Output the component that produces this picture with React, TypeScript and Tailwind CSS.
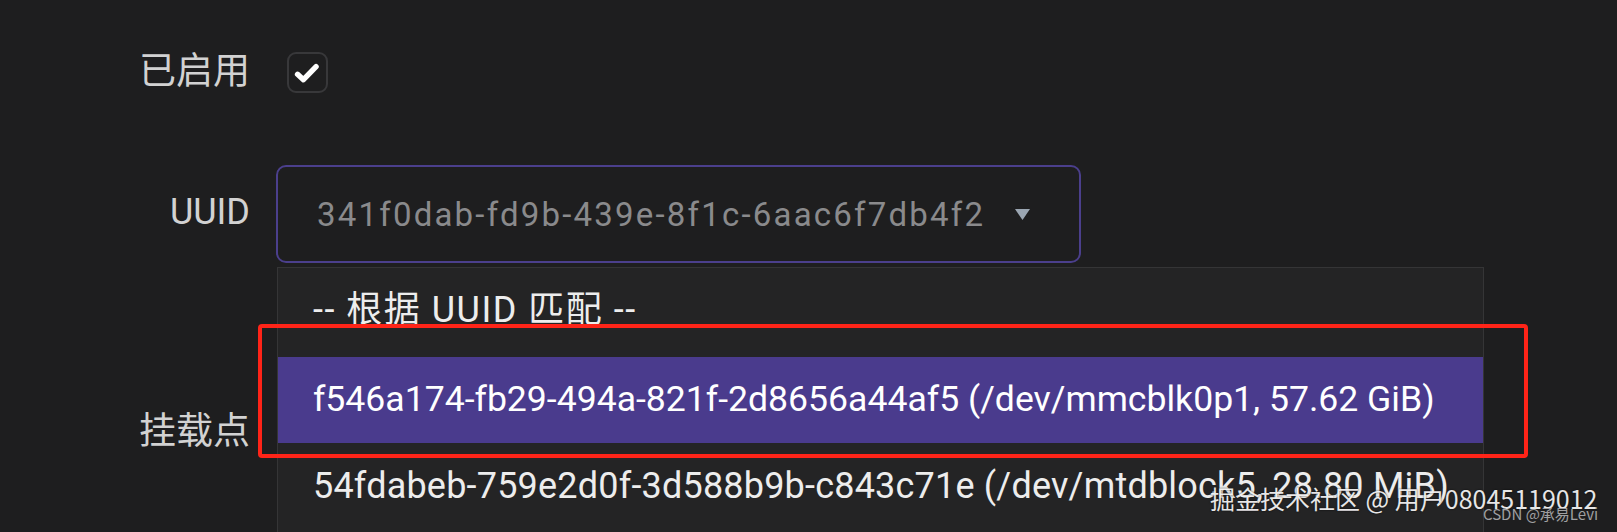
import React from "react";

export default function App() {
  return (
    <div className="relative w-[1617px] h-[532px] overflow-hidden bg-[#1e1e1f] font-['Roboto','Noto_Sans_CJK_SC',sans-serif]">
      <div className="grid grid-cols-[250px_805px] gap-x-[26px] pt-[52px]">
        {/* Row 1 */}
        <div className="flex h-[41px] items-center justify-end text-[37px] text-[#d2d2d2] font-['Noto_Sans_CJK_SC',sans-serif] leading-none -translate-y-[4px]">
          已启用
        </div>
        <div className="flex h-[41px] items-center">
          <div className="ml-[11px] flex h-[41px] w-[41px] items-center justify-center rounded-[9px] border-2 border-[#38383a] bg-[#1e1e1f]">
            <svg width="41" height="41" viewBox="0 0 41 41">
              <path d="M9.5 22.5 L16 28.5 L30 14" fill="none" stroke="#ffffff" strokeWidth="6" strokeLinecap="round" strokeLinejoin="round" />
            </svg>
          </div>
        </div>

        {/* Row 2 */}
        <div className="mt-[72px] flex h-[98px] items-center justify-end text-[36px] text-[#d2d2d2] leading-none -translate-y-[2px]">
          UUID
        </div>
        <div className="mt-[72px] flex h-[98px] items-center justify-between rounded-[10px] border-2 border-[#4b3f8c] pl-[39px] pr-[49px]">
          <span className="text-[33px] leading-none tracking-[2.2px] text-[#8a8a8c]">341f0dab-fd9b-439e-8f1c-6aac6f7db4f2</span>
          <svg width="15" height="11" viewBox="0 0 15 11">
            <path d="M0 0 L15 0 L7.5 11 Z" fill="#9ba6b2" />
          </svg>
        </div>

        {/* Row 3 */}
        <div className="mt-[118px] flex h-[98px] items-center justify-end text-[37px] text-[#d2d2d2] font-['Noto_Sans_CJK_SC',sans-serif] leading-none -translate-y-[2px]">
          挂载点
        </div>
        <div className="mt-[118px] h-[98px]" />
      </div>

      {/* Dropdown menu */}
      <div className="absolute left-[277px] top-[267px] w-[1207px] h-[300px] border border-[#353536] bg-[#242425] text-[36px] leading-none text-[#ededed]">
        <div className="flex h-[89px] items-center pl-[35px] pb-[6px] tracking-[1.5px]">-- 根据 UUID 匹配 --</div>
        <div className="flex h-[86px] items-center bg-[#4a3b8d] pl-[35px] text-[35.6px] text-white">
          f546a174-fb29-494a-821f-2d8656a44af5 (/dev/mmcblk0p1, 57.62 GiB)
        </div>
        <div className="flex h-[86px] items-center pl-[35px] tracking-[0.2px]">
          54fdabeb-759e2d0f-3d588b9b-c843c71e (/dev/mtdblock5, 28.80 MiB)
        </div>
      </div>

      {/* Red highlight */}
      <div className="absolute left-[258px] top-[324px] h-[134px] w-[1270px] rounded-[4px] border-4 border-[#ff2418]" />

      {/* Watermarks */}
      <div className="absolute left-[1210px] top-[486px] text-[25px] leading-none text-white/90 font-['Noto_Sans_CJK_SC',sans-serif] [text-shadow:0_0_2px_rgba(0,0,0,0.8)] whitespace-nowrap">
        掘金技术社区 @ 用户08045119012
      </div>
      <div className="absolute left-[1483px] top-[506px] text-[15px] leading-none text-[#a0a0a2] font-['Noto_Sans_CJK_SC',sans-serif] whitespace-nowrap">
        CSDN @承易Levi
      </div>
    </div>
  );
}
